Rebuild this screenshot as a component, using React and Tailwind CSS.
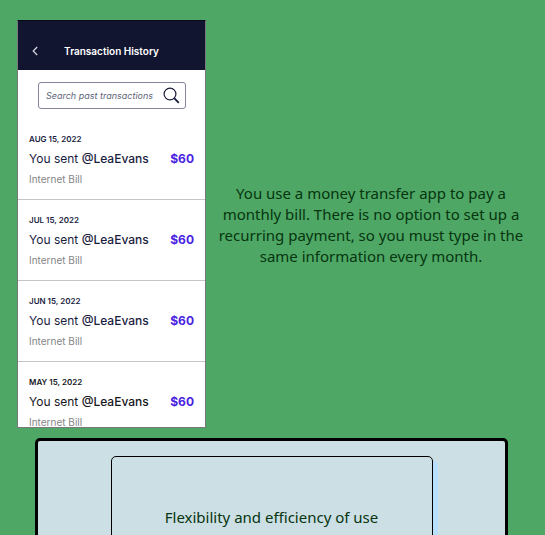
const transactions = [
  { date: "AUG 15, 2022", tone: "text-[#1b1d3f]" },
  { date: "JUL 15, 2022", tone: "text-[#1b1d3f]" },
  { date: "JUN 15, 2022", tone: "text-[#1b1d3f]" },
  { date: "MAY 15, 2022", tone: "text-[#16161c]" },
];

function Transaction({ date, tone }) {
  return (
    <li className={`h-[81px] shrink-0 border-b border-[#c4c4c6] px-[11px] pt-3.5 ${tone}`}>
      <p className="text-[8px] leading-3 font-semibold">{date}</p>
      <div className="mt-[5px] flex items-center justify-between text-[12px] leading-[18px]">
        <p>
          You sent <span className="font-medium">@LeaEvans</span>
        </p>
        <p className="font-bold text-[#4a22e0]">$60</p>
      </div>
      <p className="mt-1 text-[10px] leading-3.5 text-[#858585]">Internet Bill</p>
    </li>
  );
}

function Phone() {
  return (
    <div className="flex h-[408px] w-[189px] shrink-0 flex-col overflow-hidden border border-[#77777c] border-t-[#080b1c] bg-white font-['Inter',sans-serif]">
      <header className="relative -mx-px h-[49px] shrink-0 bg-[#11152f] text-white">
        <button type="button" aria-label="Back" className="absolute top-6 left-3.5">
          <svg width="8" height="12" viewBox="0 0 8 12" fill="none" stroke="#dcdde5" strokeWidth="1.2">
            <path d="M6.2 2 2.2 6l4 4" />
          </svg>
        </button>
        <h1 className="pt-[23px] text-center text-[10px] leading-3.5 font-semibold">Transaction History</h1>
      </header>
      <div className="mx-5 mt-3 mb-2.5 flex h-[27px] w-[148px] shrink-0 items-center rounded-[3px] border border-[#83859a] pr-[5px] pl-[7px]">
        <input
          type="text"
          aria-label="Search past transactions"
          placeholder="Search past transactions"
          className="min-w-0 flex-1 bg-transparent text-[9px] italic outline-none placeholder:text-[#626579]"
        />
        <button type="button" aria-label="Search">
          <svg width="17" height="17" viewBox="0 0 17 17" fill="none" stroke="#1b1e3c">
            <circle cx="7" cy="7" r="5.9" strokeWidth="1.2" />
            <path d="m11.2 11.2 4.6 4.6" strokeWidth="1.9" />
          </svg>
        </button>
      </div>
      <ul>
        {transactions.map((item) => (
          <Transaction key={item.date} {...item} />
        ))}
      </ul>
    </div>
  );
}

export default function App() {
  return (
    <main className="h-screen overflow-hidden bg-[#4ea765] pt-5 font-['Noto_Sans',sans-serif] text-[15px] leading-[21px] text-[#06350f]">
      <section className="flex items-center pl-[17px]">
        <Phone />
        <p className="min-w-0 flex-1 pt-0.5 pr-[19px] pl-2.5 text-center">
          You use a money transfer app to pay a monthly bill. There is no option to set up a recurring payment, so you
          must type in the same information every month.
        </p>
      </section>
      <section className="mt-2.5 mr-[37px] ml-[35px] rounded-[5px] border-[3px] border-black bg-[#ccdfe4] py-[15px]">
        <button
          type="button"
          className="mx-auto block h-[122px] w-[322px] rounded-[5px] border border-black bg-[#ccdfe4] px-4 shadow-[5px_5px_0_#b8dfff]"
        >
          Flexibility and efficiency of use
        </button>
      </section>
    </main>
  );
}
